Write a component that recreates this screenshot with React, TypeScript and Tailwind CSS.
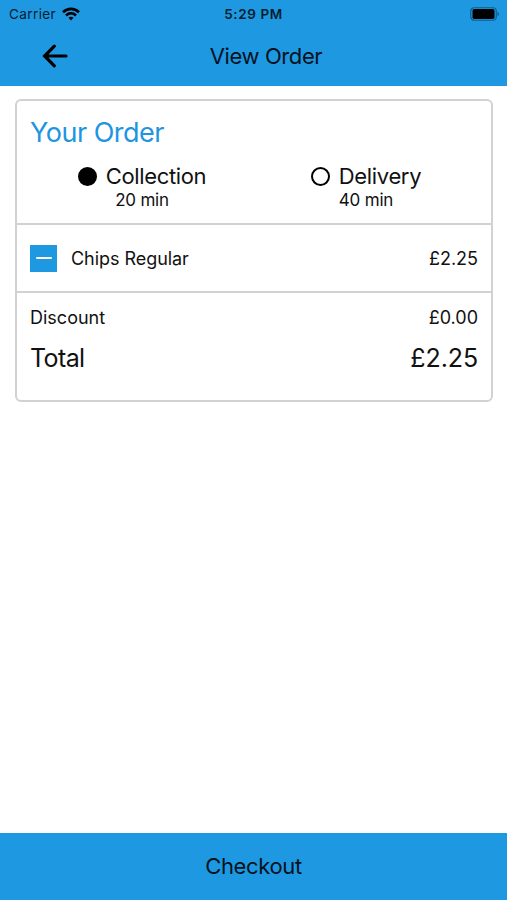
import React from "react";

const fulfilment = [
  { id: "collection", label: "Collection", time: "20 min", selected: true },
  { id: "delivery", label: "Delivery", time: "40 min", selected: false },
];

const items = [{ id: 1, name: "Chips Regular", price: "£2.25" }];

const StatusBar = () => {
  return (
    <div className="relative flex h-[27px] items-center justify-between pl-[9px] pr-[7px] text-[#04202f]">
      <div className="flex items-center gap-[6px]">
        <span className="text-[13.5px] leading-[20px] tracking-[0.4px]">Carrier</span>
        <svg className="h-[14px] w-[18px] text-black" viewBox="0 0 18 14" fill="none" stroke="currentColor" strokeWidth={2.6}>
          <path d="M1 5.2C5.6.7 12.4.7 17 5.2" />
          <path d="M4 8.5c2.9-2.8 7.1-2.8 10 0" />
          <path d="M9 13.4l-2.5-2.6c1.4-1.3 3.6-1.3 5 0z" fill="currentColor" stroke="none" />
        </svg>
      </div>
      <span className="absolute left-1/2 -translate-x-1/2 text-[13.5px] font-semibold leading-[20px] tracking-[0.6px]">5:29 PM</span>
      <svg className="h-[14px] w-[30px]" viewBox="0 0 30 14">
        <rect x="0.75" y="0.75" width="25.5" height="12.5" rx="3.5" fill="none" stroke="#0f5d8d" strokeWidth="1.2" />
        <rect x="2.5" y="2" width="22" height="10" rx="1.8" fill="#000" />
        <path d="M27.5 4.8c2 .8 2 3.6 0 4.4z" fill="#0f5d8d" />
      </svg>
    </div>
  );
};

const App = () => {
  return (
    <div className="flex h-[900px] w-full flex-col bg-white font-['Inter',sans-serif] text-[#111]">
      {/* Header */}
      <header className="h-[86px] bg-[#1f98e2]">
        <StatusBar />
        <div className="grid h-[58px] grid-cols-[1fr_auto_1fr] items-center pl-[42px] pr-[17px] text-[#03131e]">
          <button aria-label="Back" className="w-[26px] text-black">
            <svg className="h-[24px] w-[26px]" viewBox="0 0 26 24" fill="none" stroke="currentColor" strokeWidth={3.2} strokeLinecap="round" strokeLinejoin="miter">
              <path d="M24 12H3M12.3 2.2L2.6 12l9.7 9.8" />
            </svg>
          </button>
          <h1 className="text-[22px] tracking-[-0.4px]">View Order</h1>
        </div>
      </header>

      {/* Order */}
      <main className="flex-1 pl-[15px] pr-[14px] pt-[13px]">
        <section className="h-[303px] rounded-[6px] border-2 border-[#d2d2d2]">
          <div className="h-[124px] border-b-2 border-[#d2d2d2] px-[13px] pt-[14px]">
            <h2 className="text-[27px] leading-[36px] tracking-[-0.5px] text-[#1e95e0]">Your Order</h2>
            <div className="mt-[12px] grid grid-cols-2">
              {fulfilment.map((option) => (
                <div key={option.id} className="flex flex-col items-center">
                  <div className="flex items-center gap-[9px]">
                    <span
                      className={`size-[19px] rounded-full border-2 border-black ${
                        option.selected ? "bg-black" : "bg-white"
                      }`}
                    />
                    <span className="text-[22px] leading-[26px] tracking-[-0.35px]">{option.label}</span>
                  </div>
                  <span className="text-[17px] leading-[22px] tracking-[-0.2px]">{option.time}</span>
                </div>
              ))}
            </div>
          </div>

          {items.map((item) => (
            <div key={item.id} className="flex h-[68px] items-center border-b-2 border-[#d2d2d2] px-[13px] text-[18px]">
              <button aria-label="Remove" className="flex size-[27px] items-center justify-center bg-[#1f98e2]">
                <span className="h-[2px] w-[16px] rounded-full bg-white" />
              </button>
              <span className="ml-[14px] flex-1 tracking-[-0.05px]">{item.name}</span>
              <span>{item.price}</span>
            </div>
          ))}

          {/* Totals */}
          <div className="px-[13px] pt-[12px]">
            <div className="flex justify-between text-[18px] leading-[26px]">
              <span>Discount</span>
              <span>£0.00</span>
            </div>
            <div className="mt-[9px] flex justify-between text-[25px] leading-[36px]">
              <span className="tracking-[-0.6px]">Total</span>
              <span className="tracking-[-0.1px]">£2.25</span>
            </div>
          </div>
        </section>
      </main>

      <button className="h-[67px] bg-[#1f98e2] text-[22px] tracking-[-0.35px] text-[#03131e]">Checkout</button>
    </div>
  );
};

export default App;
